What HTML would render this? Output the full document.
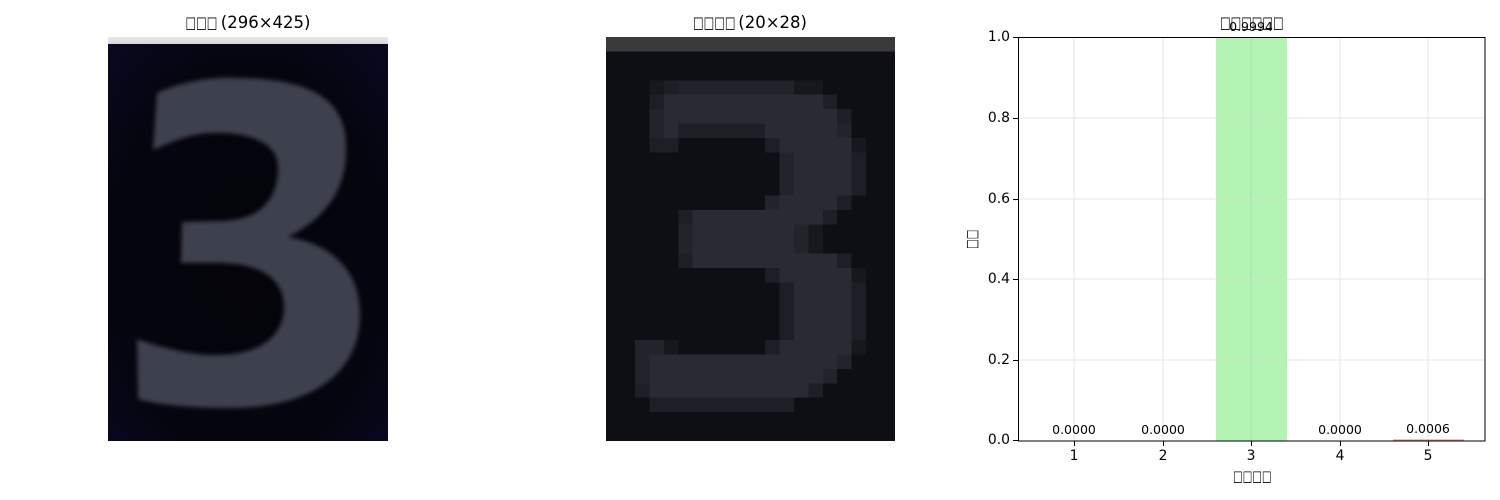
<!DOCTYPE html>
<html><head><meta charset="utf-8"><style>
html,body{margin:0;padding:0;background:#fff;width:1500px;height:500px;overflow:hidden;position:relative;font-family:"DejaVu Sans","Liberation Sans",sans-serif;color:#000}
.t{position:absolute;white-space:nowrap;font-size:16.5px;line-height:1;transform:translateX(-50%)}
.tk{position:absolute;font-size:13.9px;line-height:1;white-space:nowrap}
.bl{position:absolute;font-size:12.5px;line-height:1;white-space:nowrap;transform:translateX(-50%)}
.bx{display:inline-block;overflow:visible;white-space:nowrap}
.bx>span{display:inline-block;transform:scaleX(.68);transform-origin:left center}
</style></head><body>
<div class="t" style="left:248px;top:15px"><span class="bx" style="width:30px"><span>□□□</span></span> (296×425)</div>
<div class="t" style="left:750px;top:15px"><span class="bx" style="width:40px"><span>□□□□</span></span> (20×28)</div>
<div class="t" style="left:1251px;top:15px"><span class="bx" style="width:62px"><span>□□□□□□</span></span></div>

<svg style="position:absolute;left:108px;top:37px" width="280" height="404" viewBox="0 0 280 404">
<defs><filter id="bl" x="-10%" y="-10%" width="120%" height="120%"><feGaussianBlur stdDeviation="2"/></filter>
<radialGradient id="bg" cx="50%" cy="55%" r="70%"><stop offset="0" stop-color="#040409"/><stop offset="0.7" stop-color="#05050f"/><stop offset="1" stop-color="#080820"/></radialGradient>
<linearGradient id="tp" x1="0" y1="0" x2="0" y2="1"><stop offset="0" stop-color="#e8e8e8"/><stop offset="1" stop-color="#d8d8d8"/></linearGradient></defs>
<rect width="280" height="404" fill="url(#bg)"/>
<rect width="280" height="7" fill="url(#tp)"/>
<path filter="url(#bl)" fill="#3d404e" d="M49,56 C80,42 110,40 130,41 C200,42 238,60 238,110 C239,150 220,180 180,200 C230,208 253,240 252,280 C250,345 190,372 120,371 C85,371 50,368 30,362 L29,302 C60,313 90,319 110,318 C150,318 176,300 176,270 C176,240 150,226 110,226 L73,226 L74,185 L110,184 C150,184 170,165 170,130 C170,105 140,95 105,96 C85,96 65,104 45,113 Z"/>
</svg>

<svg id="g2" style="position:absolute;left:606px;top:37px" width="289" height="404" viewBox="0 0 20 28" preserveAspectRatio="none" shape-rendering="crispEdges"></svg>

<svg style="position:absolute;left:0;top:0" width="1500" height="500">
<g stroke="#e6e6e6" stroke-width="1">
<line x1="1074" y1="37" x2="1074" y2="441"/><line x1="1163" y1="37" x2="1163" y2="441"/><line x1="1340" y1="37" x2="1340" y2="441"/><line x1="1428" y1="37" x2="1428" y2="441"/>
<line x1="1018" y1="118" x2="1485" y2="118"/><line x1="1018" y1="199" x2="1485" y2="199"/><line x1="1018" y1="279" x2="1485" y2="279"/><line x1="1018" y1="360" x2="1485" y2="360"/>
</g>
<rect x="1216" y="37" width="71" height="404" fill="#b3f3b3"/>
<line x1="1251" y1="37" x2="1251" y2="441" stroke="#a8dca8" stroke-width="1"/>
<g stroke="#c8e8c8"><line x1="1216" y1="118" x2="1287" y2="118"/><line x1="1216" y1="199" x2="1287" y2="199"/><line x1="1216" y1="279" x2="1287" y2="279"/><line x1="1216" y1="360" x2="1287" y2="360"/></g>
<rect x="1393" y="439.5" width="71" height="1.5" fill="#f08080"/>
<rect x="1018.5" y="37.5" width="466.5" height="403.5" fill="none" stroke="#000" stroke-width="1"/>
<g stroke="#000" stroke-width="1">
<line x1="1013" y1="37.5" x2="1018" y2="37.5"/><line x1="1013" y1="118.5" x2="1018" y2="118.5"/><line x1="1013" y1="199.5" x2="1018" y2="199.5"/><line x1="1013" y1="279.5" x2="1018" y2="279.5"/><line x1="1013" y1="360.5" x2="1018" y2="360.5"/><line x1="1013" y1="440.5" x2="1018" y2="440.5"/>
<line x1="1074.5" y1="441" x2="1074.5" y2="446"/><line x1="1163.5" y1="441" x2="1163.5" y2="446"/><line x1="1251.5" y1="441" x2="1251.5" y2="446"/><line x1="1340.5" y1="441" x2="1340.5" y2="446"/><line x1="1428.5" y1="441" x2="1428.5" y2="446"/>
</g>
</svg>
<div class="tk" style="right:490px;top:31px">1.0</div>
<div class="tk" style="right:490px;top:112px">0.8</div>
<div class="tk" style="right:490px;top:193px">0.6</div>
<div class="tk" style="right:490px;top:273px">0.4</div>
<div class="tk" style="right:490px;top:354px">0.2</div>
<div class="tk" style="right:490px;top:434px">0.0</div>
<div class="tk" style="left:1074px;top:450px;transform:translateX(-50%)">1</div>
<div class="tk" style="left:1163px;top:450px;transform:translateX(-50%)">2</div>
<div class="tk" style="left:1251px;top:450px;transform:translateX(-50%)">3</div>
<div class="tk" style="left:1340px;top:450px;transform:translateX(-50%)">4</div>
<div class="tk" style="left:1428px;top:450px;transform:translateX(-50%)">5</div>
<div class="bl" style="left:1074px;top:424px">0.0000</div>
<div class="bl" style="left:1163px;top:424px">0.0000</div>
<div class="bl" style="left:1251px;top:21px">0.9994</div>
<div class="bl" style="left:1340px;top:424px">0.0000</div>
<div class="bl" style="left:1428px;top:423px">0.0006</div>
<div class="tk" style="left:1251px;top:469px;transform:translateX(-50%);font-size:15px"><span class="bx" style="width:36px"><span>□□□□</span></span></div>
<div class="tk" style="left:972px;top:240px;transform:translate(-50%,-50%) rotate(-90deg);font-size:15px"><span class="bx" style="width:18px"><span>□□</span></span></div>
<script>
var rows=["aaaaaaaaaaaaaaaaaaaa","....................","....................",
"...abccccccccaa.....","...bLLLLLLLLLLLb....","...cLLLLLLLLLLLLb...","...cLbbbbbbLLLLLc...",
"...bb......bLLLLLa..","............cLLLLb..","............cLLLLb..","............cLLLLb..",
"...........cLLLLb...",".....bLLLLLLLLLb....",".....cLLLLLLLca.....",".....cLLLLLLLca.....",
".....bLLLLLLLLLLb...","...........bLLLLLa..","............bLLLLb..","............bLLLLb..",
"............bLLLLb..","............bLLLLb..","..cca......bLLLLLa..","..cLLLLLLLLLLLLLc...",
"..cLLLLLLLLLLLLc....","..bLLLLLLLLLLLb.....","...bbbbbbbbbb.......","....................","...................."];
var col={'.':'#0e0f14','a':'#17181d','b':'#1d1f26','c':'#22242b','L':'#282b33'};
var s='';
for(var r=0;r<28;r++){for(var c=0;c<20;c++){var ch=rows[r][c];var f=r==0?'#3a3a3c':col[ch];s+='<rect x="'+c+'" y="'+r+'" width="1.02" height="1.02" fill="'+f+'"/>';}}
document.getElementById('g2').innerHTML=s;
</script>
</body></html>
